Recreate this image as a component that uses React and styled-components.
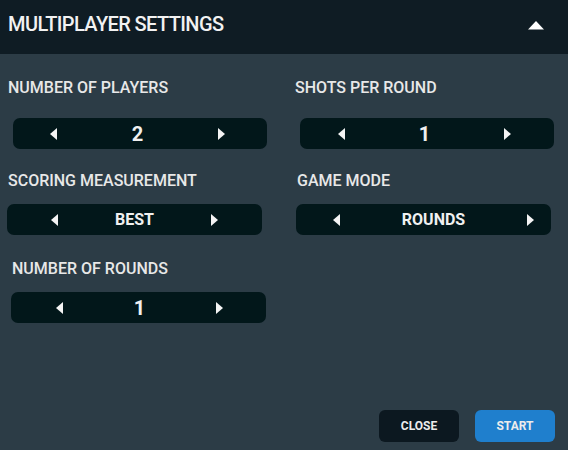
import React from "react";
import styled, { createGlobalStyle } from "styled-components";

const Global = createGlobalStyle`
  html, body { margin: 0; padding: 0; }
  body { background: #2c3c46; font-family: Roboto, "Open Sans", sans-serif; }
  * { box-sizing: border-box; }
`;

const Panel = styled.div`
  width: 568px;
  height: 450px;
  display: flex;
  flex-direction: column;
  background: #2c3c46;
  color: #ececec;
`;

const Header = styled.div`
  height: 54px;
  flex: none;
  display: flex;
  align-items: center;
  justify-content: space-between;
  padding: 0 24px 4px 8px;
  background: #0f1c24;
`;

const Title = styled.h1`
  margin: 0 0 3px;
  font-size: 20px;
  font-weight: 500;
  letter-spacing: -0.6px;
  line-height: 1;
  color: #f2f2f2;
`;

const Body = styled.div`
  flex: 1;
  display: flex;
  flex-direction: column;
  padding-top: 26px;
`;

const Grid = styled.div`
  display: grid;
  grid-template-columns: 288px 280px;
  row-gap: 24px;
`;

const Field = styled.div`
  display: flex;
  flex-direction: column;
  gap: ${(p) => p.$gap}px;
  margin-top: ${(p) => p.$mt || 0}px;
`;

const Label = styled.div`
  font-size: 16px;
  font-weight: 500;
  line-height: 16px;
  color: #e8e8e8;
  margin-left: ${(p) => p.$x}px;
  white-space: nowrap;
`;

const Selector = styled.div`
  width: ${(p) => p.$w || 255}px;
  height: 31px;
  margin-left: ${(p) => p.$x}px;
  border-radius: 7px;
  background: #02171a;
  display: flex;
  align-items: center;
  padding: 0 ${(p) => p.$pr}px 0 ${(p) => p.$pl}px;
`;

const ArrowBtn = styled.span`
  display: flex;
  width: 8px;
  height: 12px;
  flex: none;
  color: #f4f4f4;
`;

const Value = styled.span`
  flex: 1;
  text-align: center;
  color: #f0f0f0;
  font-weight: 700;
  font-size: ${(p) => (p.$num ? 20 : 16)}px;
  line-height: 1;
`;

const Footer = styled.div`
  margin-top: auto;
  display: flex;
  justify-content: flex-end;
  gap: 16px;
  padding: 0 13px 8px 0;
`;

const Button = styled.button`
  width: 80px;
  height: 32px;
  border: none;
  border-radius: 6px;
  background: ${(p) => (p.$primary ? "#1f7fcd" : "#0c1820")};
  color: #ececec;
  font-family: Roboto, sans-serif;
  font-size: 12px;
  font-weight: 700;
  cursor: pointer;
`;

const Left = () => (
  <ArrowBtn>
    <svg width="8" height="12" viewBox="0 0 8 12"><polygon points="7,0 7,12 0,6" fill="currentColor" /></svg>
  </ArrowBtn>
);
const Right = () => (
  <ArrowBtn>
    <svg width="8" height="12" viewBox="0 0 8 12"><polygon points="1,0 1,12 8,6" fill="currentColor" /></svg>
  </ArrowBtn>
);

const Caret = () => (
  <svg width="16" height="9" viewBox="0 0 16 9"><polygon points="8,0 16,8.5 0,8.5" fill="#fff" /></svg>
);

const SelectField = ({ label, value, num, lx, sx, pl, pr, gap, mt, w }) => (
  <Field $gap={gap} $mt={mt}>
    <Label $x={lx}>{label}</Label>
    <Selector $x={sx} $pl={pl} $pr={pr} $w={w}>
      <Left />
      <Value $num={num}>{value}</Value>
      <Right />
    </Selector>
  </Field>
);

export default function App() {
  return (
    <>
      <Global />
      <Panel>
        <Header>
          <Title>MULTIPLAYER SETTINGS</Title>
          <Caret />
        </Header>
        <Body>
          <Grid>
            <SelectField label="NUMBER OF PLAYERS" value="2" num lx={8} sx={13} w={254} pl={37} pr={42} gap={22} />
            <SelectField label="SHOTS PER ROUND" value="1" num lx={7} sx={12} w={254} pl={38} pr={43} gap={22} />
            <SelectField label="SCORING MEASUREMENT" value="BEST" lx={8} sx={7} pl={44} pr={44} gap={15} />
            <SelectField label="GAME MODE" value="ROUNDS" lx={9} sx={8} pl={37} pr={17} gap={15} />
            <SelectField label="NUMBER OF ROUNDS" value="1" num lx={12} sx={11} pl={45} pr={43} gap={15} mt={2} />
          </Grid>
          <Footer>
            <Button>CLOSE</Button>
            <Button $primary>START</Button>
          </Footer>
        </Body>
      </Panel>
    </>
  );
}
